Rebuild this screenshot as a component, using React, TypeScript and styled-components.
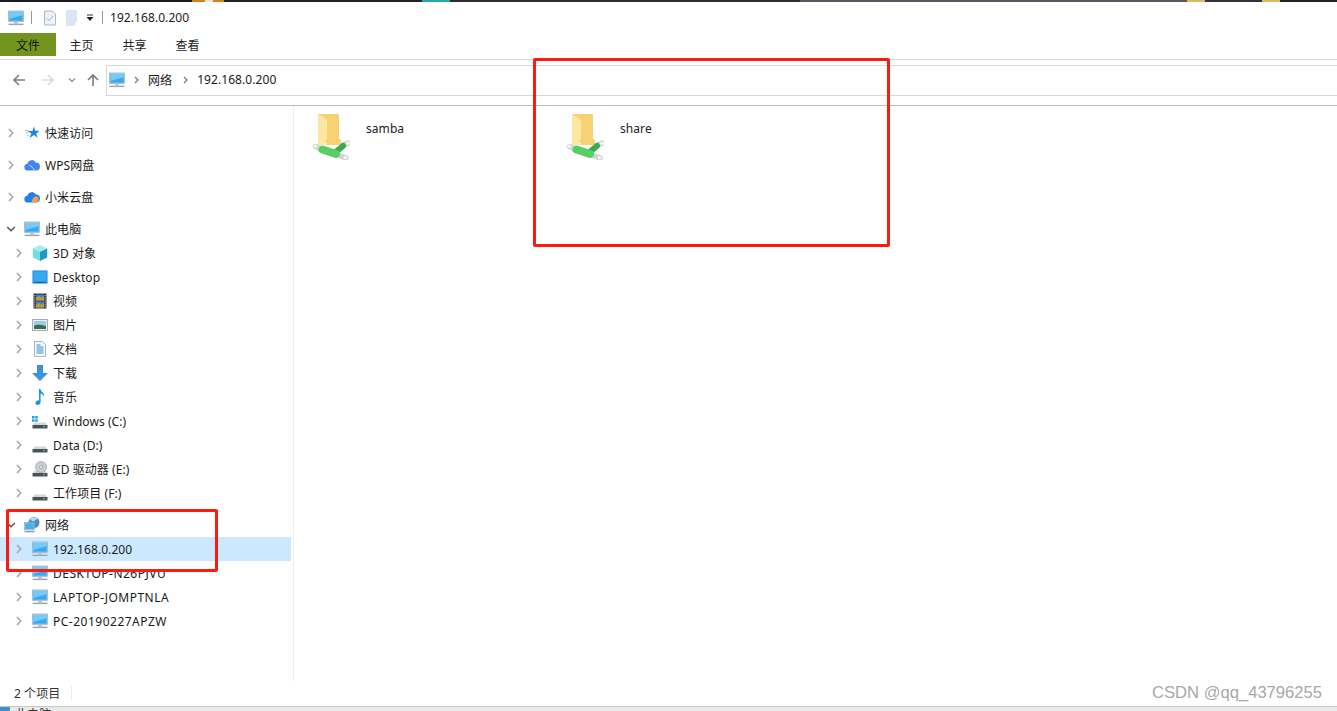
import React from "react";
import styled, { createGlobalStyle } from "styled-components";

const GlobalStyle = createGlobalStyle`
  html, body {
    margin: 0;
    padding: 0;
    background: #fff;
    overflow: hidden;
  }
`;

const Page = styled.div`
  position: relative;
  width: 1337px;
  height: 711px;
  overflow: hidden;
  display: flex;
  flex-direction: column;
  background: #fff;
  color: #1a1a1a;
  font-family: "Noto Sans", "Noto Sans CJK SC", sans-serif;
  font-size: 12px;
  letter-spacing: 0.07px;
`;

const WallpaperStrip = styled.div`
  flex: 0 0 2px;
  background: linear-gradient(
    90deg,
    #1d1b22 0 192px,
    #d9801e 192px 205px,
    #e8e4dc 205px 213px,
    #d9801e 213px 224px,
    #24222a 224px 422px,
    #2ba6ad 422px 450px,
    #2d2b33 450px 800px,
    #5b5664 800px 1187px,
    #dcb964 1187px 1205px,
    #34313a 1205px 1262px,
    #dcb964 1262px 1280px,
    #24222a 1280px
  );
`;

const TitleBar = styled.div`
  flex: 0 0 31px;
  display: flex;
  align-items: center;
  padding-left: 8px;
`;

const TitleSeparator = styled.span<{ $left: number; $right: number }>`
  width: 1px;
  height: 13px;
  background: #9a9a9a;
  margin: 0 ${(p) => p.$right}px 0 ${(p) => p.$left}px;
`;

const QatItem = styled.span<{ $right: number }>`
  display: flex;
  margin-right: ${(p) => p.$right}px;
`;

const TabBar = styled.div`
  flex: 0 0 27px;
  box-sizing: border-box;
  display: flex;
  align-items: flex-start;
  border-bottom: 1px solid #d9d9d9;
`;

const FileTab = styled.div`
  width: 56px;
  height: 23px;
  margin-right: -1px;
  display: flex;
  align-items: center;
  justify-content: center;
  background: #72951f;
  color: #10140a;
`;

const Tab = styled.div`
  width: 53px;
  height: 23px;
  display: flex;
  align-items: center;
  justify-content: center;
  color: #222;
`;

const NavBar = styled.div`
  flex: 0 0 46px;
  display: flex;
  align-items: flex-start;
  padding-top: 5px;
  box-sizing: border-box;
  border-bottom: 1px solid #bdbdbd;
`;

const NavButtons = styled.div`
  width: 106px;
  height: 30px;
  display: flex;
  align-items: center;
  flex: none;
  padding-left: 12px;
  box-sizing: border-box;
`;

const NavButton = styled.span<{ $right: number }>`
  display: flex;
  margin-right: ${(p) => p.$right}px;
`;

const AddressBox = styled.div`
  flex: 1;
  height: 31px;
  box-sizing: border-box;
  border: 1px solid #d9d9d9;
  border-right: none;
  display: flex;
  align-items: center;
  padding: 0 0 2px 2px;
`;

const Crumb = styled.span`
  display: flex;
  margin: 0 8px 0 9px;
`;

const CrumbLabel = styled.span`
  margin-right: 2px;
`;

const Main = styled.div`
  flex: 1;
  display: flex;
  min-height: 0;
`;

const Sidebar = styled.nav`
  width: 294px;
  flex: none;
  box-sizing: border-box;
  border-right: 1px solid #f0f0f0;
  padding: 15px 2px 0 0;
  display: flex;
  flex-direction: column;
  gap: 8px;
`;

const TreeGroup = styled.div`
  display: flex;
  flex-direction: column;
`;

const TreeRow = styled.div<{ $depth: number; $selected?: boolean }>`
  height: 24px;
  display: flex;
  align-items: center;
  box-sizing: border-box;
  padding-left: ${(p) => (p.$depth === 0 ? 6 : 14)}px;
  background: ${(p) => (p.$selected ? "#cce8ff" : "transparent")};
`;

const ChevronSlot = styled.span`
  width: 10px;
  height: 10px;
  flex: none;
  margin-right: 8px;
  display: flex;
`;

const RowIcon = styled.span`
  width: 16px;
  height: 16px;
  flex: none;
  margin-right: 5px;
  display: flex;
`;

const RowLabel = styled.span<{ $caps?: boolean }>`
  letter-spacing: ${(p) => (p.$caps ? "0.5px" : "inherit")};
`;

const Files = styled.section`
  flex: 1;
  display: flex;
  align-items: flex-start;
  padding: 8px 0 0 18px;
`;

const FileTile = styled.div`
  width: 254px;
  display: flex;
  align-items: flex-start;
`;

const FileIcon = styled.span`
  width: 38px;
  height: 46px;
  flex: none;
  display: flex;
  margin-right: 16px;
`;

const FileName = styled.span`
  margin-top: 6px;
`;

const StatusBar = styled.div`
  flex: 0 0 25px;
  box-sizing: border-box;
  display: flex;
  align-items: center;
  padding: 0 0 2px 14px;
  color: #333;
`;

const StatusDivider = styled.span`
  width: 1px;
  height: 14px;
  margin-left: 11px;
  background: #ececec;
`;

const Taskbar = styled.div`
  flex: 0 0 5px;
  display: flex;
  overflow: hidden;
  background: #e9e9e9;
  border-top: 1px solid #c8c8c8;
  box-sizing: border-box;
  line-height: 16px;
  padding-left: 15px;
  color: #333;
`;

const TaskbarIcon = styled.span`
  position: absolute;
  left: 0;
  bottom: 0;
  width: 10px;
  height: 4px;
  background: #3f8fd0;
`;

const RedBox = styled.div<{ $x: number; $y: number; $w: number; $h: number }>`
  position: absolute;
  left: ${(p) => p.$x}px;
  top: ${(p) => p.$y}px;
  width: ${(p) => p.$w}px;
  height: ${(p) => p.$h}px;
  box-sizing: border-box;
  border: 3px solid #fb1b10;
  border-radius: 2px;
`;

const Watermark = styled.div`
  position: absolute;
  right: 15px;
  top: 683px;
  color: #a8a8a8;
  font-family: "Liberation Sans", sans-serif;
  font-size: 16.6px;
  letter-spacing: 0;
  line-height: 20px;
`;

const Svg = styled.svg`
  display: block;
  flex: none;
`;

const Chevron = ({ open }: { open?: boolean }) => (
  <Svg width="10" height="10" viewBox="0 0 10 10" fill="none">
    {open ? (
      <path d="M1.2 3l3.8 3.8L8.8 3" stroke="#555" strokeWidth="1.5" />
    ) : (
      <path d="M3 1l3.8 4L3 9" stroke="#a8a8a8" strokeWidth="1.6" />
    )}
  </Svg>
);

const PcIcon = () => (
  <Svg width="16" height="16" viewBox="0 0 16 16">
    <rect x="0.5" y="1" width="15" height="10.5" fill="#d7e6f2" stroke="#8a98a6" strokeWidth="0.6" />
    <rect x="1.2" y="1.8" width="13.6" height="9" fill="#38a8f2" />
    <path d="M1.2 1.8h13.6v3.5L1.2 9z" fill="#74cbfa" />
    <rect x="6" y="11.5" width="4" height="2" fill="#b9c3cc" />
    <rect x="0.5" y="13.6" width="15" height="1.5" fill="#9aa7b3" />
  </Svg>
);

const StarIcon = () => (
  <Svg width="16" height="16" viewBox="0 0 16 16">
    <path d="M10 1.500l1.300 4.200 4.400.1-3.500 2.600 1.300 4.300-3.500-2.600-4.500 3 1.800-4.700L3.500 6h5z" fill="#1a87dd" />
    <path d="M1 5.500h3.500M2 8h2.500M3 10.500h1.500" stroke="#7cc4f0" strokeWidth="0.900" />
  </Svg>
);

const WpsCloudIcon = () => (
  <Svg width="16" height="16" viewBox="0 0 16 16">
    <path d="M4 13.500a3.400 3.400 0 0 1-.5-6.800A4.400 4.400 0 0 1 11.800 5.600 3.900 3.900 0 0 1 12.200 13.500z" fill="#3f86ee" />
    <path d="M5.500 8.500c2 0 3 2.500 5 4.500" stroke="#cfe2fb" strokeWidth="1" fill="none" />
  </Svg>
);

const MiCloudIcon = () => (
  <Svg width="16" height="16" viewBox="0 0 16 16">
    <path d="M4 13.500a3.400 3.400 0 0 1-.5-6.800A4.400 4.400 0 0 1 11.800 5.600 3.900 3.900 0 0 1 12.200 13.500z" fill="#1f80ec" />
    <path d="M11.600 7.200a3.200 3.200 0 0 1 .6 6.300H7.600c.4-3.400 1.800-5.600 4-6.300z" fill="#f79a55" />
  </Svg>
);

const CubeIcon = () => (
  <Svg width="16" height="16" viewBox="0 0 16 16">
    <path d="M8 0l7.200 3.400-7.200 3.400L.8 3.400z" fill="#a4ecef" />
    <path d="M.8 3.400L8 6.800V16L.8 12.400z" fill="#76dbe2" />
    <path d="M15.200 3.400L8 6.800V16l7.200-3.600z" fill="#1a9bc0" />
  </Svg>
);

const DesktopIcon = () => (
  <Svg width="16" height="16" viewBox="0 0 16 16">
    <rect x="0.500" y="1.500" width="15" height="13" fill="#1580d6" />
    <rect x="1.300" y="2.300" width="13.400" height="10.400" fill="#36a9ee" />
    <rect x="3" y="13" width="10" height="1" fill="#0c5fa6" />
  </Svg>
);

const FilmIcon = () => (
  <Svg width="16" height="16" viewBox="0 0 16 16">
    <rect x="1.500" y="0.500" width="13" height="15" fill="#37393d" />
    <rect x="4" y="1.500" width="8" height="6" fill="#3f7fd0" />
    <rect x="4" y="8.500" width="8" height="6" fill="#3f7fd0" />
    <path d="M4 5l3-2 2 2 3-2v4.500H4zM4 12l3-2 2 2 3-2v4.500H4z" fill="#c79a2d" />
    <path d="M2.800 2v12M13.200 2v12" stroke="#cfd3d6" strokeWidth="1" strokeDasharray="1 1.200" />
  </Svg>
);

const PictureIcon = () => (
  <Svg width="16" height="16" viewBox="0 0 16 16">
    <rect x="0.500" y="2.500" width="15" height="11" fill="#eef1f4" stroke="#8f99a3" strokeWidth="0.800" />
    <rect x="2" y="4" width="12" height="8" fill="#9fcbe4" />
    <path d="M2 9c3-2 6-1 12 0v3H2z" fill="#3b6a57" />
  </Svg>
);

const DocIcon = () => (
  <Svg width="16" height="16" viewBox="0 0 16 16">
    <path d="M2.500.500h8l3 3v12h-11z" fill="#f6f7f8" stroke="#9aa2aa" strokeWidth="0.800" />
    <path d="M4.500 4h4M4.500 6h7M4.500 8h7M4.500 10h7M4.500 12h7" stroke="#2f8fdc" strokeWidth="1" />
  </Svg>
);

const DownloadIcon = () => (
  <Svg width="16" height="16" viewBox="0 0 16 16">
    <path d="M5 0h6v8h5l-8 8-8-8h5z" fill="#3d8fe0" />
  </Svg>
);

const MusicIcon = () => (
  <Svg width="16" height="16" viewBox="0 0 16 16">
    <path d="M7 0h1.400c.4 3 4.600 3.600 3.600 8-.6-2.200-2-3-3.400-3.400V13c0 1.700-1.500 3-3.300 3C4.300 16 3.500 15.200 3.500 14c0-1.600 1.700-3 3.500-2.800z" fill="#1c95e6" />
  </Svg>
);

const DriveBase = () => (
  <>
    <path d="M2.500 9.500h11l2 3h-15z" fill="#d5d8db" />
    <rect x="0.500" y="12" width="15" height="3.500" rx="0.500" fill="#4c5157" />
    <rect x="11" y="13.200" width="2" height="1" fill="#4fd05a" />
  </>
);

const WindowsDriveIcon = () => (
  <Svg width="16" height="16" viewBox="0 0 16 16">
    <DriveBase />
    <path d="M0 3h2.500v2.500H0zM3.200 3h2.500v2.500H3.200zM0 6.200h2.500v2.500H0zM3.200 6.200h2.500v2.500H3.200z" fill="#1aa0e8" />
  </Svg>
);

const DriveIcon = () => (
  <Svg width="16" height="16" viewBox="0 0 16 16">
    <DriveBase />
  </Svg>
);

const CdIcon = () => (
  <Svg width="16" height="16" viewBox="0 0 16 16">
    <DriveBase />
    <circle cx="9" cy="6" r="5.500" fill="#c9ced2" stroke="#8e959b" strokeWidth="0.600" />
    <circle cx="9" cy="6" r="1.500" fill="#f4f5f6" stroke="#858c92" strokeWidth="0.600" />
  </Svg>
);

const NetworkIcon = () => (
  <Svg width="16" height="16" viewBox="0 0 16 16">
    <circle cx="10" cy="5.500" r="5.500" fill="#4b8fc4" />
    <path d="M6 2.500C8 0 12 0 14 2c-2.500 0-3 2-5 2.500z" fill="#b8dff2" />
    <rect x="0.500" y="5.500" width="10" height="7.500" fill="#d7e6f2" stroke="#6f8192" strokeWidth="0.500" />
    <rect x="1.200" y="6.200" width="8.600" height="6" fill="#41aef0" />
    <rect x="0.500" y="14" width="10" height="1.300" fill="#8f9eac" />
  </Svg>
);

const ShareFolderIcon = () => (
  <Svg width="38" height="46" viewBox="0 0 38 46" fill="none">
    <path d="M6 0h21v25l2 1v5H6z" fill="#f6d273" />
    <path d="M6 0l9 5.500V31H6z" fill="#fde7a2" />
    <path d="M15 5.500V25l-1 3h1z" fill="#e5b94f" />
    <path d="M3.500 32.500l7 3M31 31l5.500-2M26 41l8 3" stroke="#cfd3d2" strokeWidth="5.500" strokeLinecap="round" />
    <path d="M3 32l1 .5M36.500 29l-1 .4M34 44l-1-.4" stroke="#f2f3f3" strokeWidth="3" strokeLinecap="round" />
    <path d="M23 38.500l8-6.500" stroke="#36ad4a" strokeWidth="6" strokeLinecap="round" />
    <path d="M10.500 35.500l13.500 4.500" stroke="#58cf63" strokeWidth="8" strokeLinecap="round" />
  </Svg>
);

const BackArrow = () => (
  <Svg width="14" height="14" viewBox="0 0 14 14" fill="none">
    <path d="M13 7H2M7 2L2 7l5 5" stroke="#7d7d7d" strokeWidth="1.600" />
  </Svg>
);

const ForwardArrow = () => (
  <Svg width="14" height="14" viewBox="0 0 14 14" fill="none">
    <path d="M1 7h11M7 2l5 5-5 5" stroke="#d9d9d9" strokeWidth="1.600" />
  </Svg>
);

const SmallDown = () => (
  <Svg width="8" height="8" viewBox="0 0 8 8" fill="none">
    <path d="M1 2.500l3 3 3-3" stroke="#9a9a9a" strokeWidth="1.400" />
  </Svg>
);

const UpArrow = () => (
  <Svg width="14" height="14" viewBox="0 0 14 14" fill="none">
    <path d="M7 13V2M2 7l5-5 5 5" stroke="#7d7d7d" strokeWidth="1.600" />
  </Svg>
);

const CrumbChevron = () => (
  <Svg width="6" height="8" viewBox="0 0 6 8" fill="none">
    <path d="M1 1l3 3-3 3" stroke="#808080" strokeWidth="1.400" />
  </Svg>
);

const QatCheckDoc = () => (
  <Svg width="14" height="16" viewBox="0 0 14 16" fill="none">
    <path d="M1.500 1h8l3 3v11h-11z" fill="#edf2f9" stroke="#a9b9cf" />
    <path d="M4 8.500l2 2 4-4.500" stroke="#9fb0c5" strokeWidth="1" />
  </Svg>
);

const QatBlankDoc = () => (
  <Svg width="14" height="16" viewBox="0 0 14 16">
    <path d="M1 0h11v16H1z" fill="#dce5f3" />
    <path d="M10 12h2v4h-2z" fill="#f6f8fb" />
  </Svg>
);

const QatDropdown = () => (
  <Svg width="8" height="8" viewBox="0 0 8 8">
    <rect x="1" y="0.500" width="6" height="1" fill="#333" />
    <path d="M0.500 3h7L4 7z" fill="#222" />
  </Svg>
);

type Node = { label: string; icon: React.ReactNode; selected?: boolean; caps?: boolean };

const pinned: Node[] = [
  { label: "快速访问", icon: <StarIcon /> },
  { label: "WPS网盘", icon: <WpsCloudIcon /> },
  { label: "小米云盘", icon: <MiCloudIcon /> },
];

const thisPc: Node[] = [
  { label: "3D 对象", icon: <CubeIcon /> },
  { label: "Desktop", icon: <DesktopIcon /> },
  { label: "视频", icon: <FilmIcon /> },
  { label: "图片", icon: <PictureIcon /> },
  { label: "文档", icon: <DocIcon /> },
  { label: "下载", icon: <DownloadIcon /> },
  { label: "音乐", icon: <MusicIcon /> },
  { label: "Windows (C:)", icon: <WindowsDriveIcon /> },
  { label: "Data (D:)", icon: <DriveIcon /> },
  { label: "CD 驱动器 (E:)", icon: <CdIcon /> },
  { label: "工作项目 (F:)", icon: <DriveIcon /> },
];

const network: Node[] = [
  { label: "192.168.0.200", icon: <PcIcon />, selected: true },
  { label: "DESKTOP-N26PJVU", icon: <PcIcon />, caps: true },
  { label: "LAPTOP-JOMPTNLA", icon: <PcIcon />, caps: true },
  { label: "PC-20190227APZW", icon: <PcIcon />, caps: true },
];

const Row = ({ node, depth, open }: { node: Node; depth: number; open?: boolean }) => (
  <TreeRow $depth={depth} $selected={node.selected}>
    <ChevronSlot>
      <Chevron open={open} />
    </ChevronSlot>
    <RowIcon>{node.icon}</RowIcon>
    <RowLabel $caps={node.caps}>{node.label}</RowLabel>
  </TreeRow>
);

const App: React.FC = () => {
  return (
    <Page>
      <GlobalStyle />
      <WallpaperStrip />
      <TitleBar>
        <PcIcon />
        <TitleSeparator $left={7} $right={11} />
        <QatItem $right={8}>
          <QatCheckDoc />
        </QatItem>
        <QatItem $right={7}>
          <QatBlankDoc />
        </QatItem>
        <QatDropdown />
        <TitleSeparator $left={8} $right={7} />
        <span>192.168.0.200</span>
      </TitleBar>
      <TabBar>
        <FileTab>文件</FileTab>
        <Tab>主页</Tab>
        <Tab>共享</Tab>
        <Tab>查看</Tab>
      </TabBar>
      <NavBar>
        <NavButtons>
          <NavButton $right={15}>
            <BackArrow />
          </NavButton>
          <NavButton $right={13}>
            <ForwardArrow />
          </NavButton>
          <NavButton $right={10}>
            <SmallDown />
          </NavButton>
          <UpArrow />
        </NavButtons>
        <AddressBox>
          <PcIcon />
          <Crumb>
            <CrumbChevron />
          </Crumb>
          <CrumbLabel>网络</CrumbLabel>
          <Crumb>
            <CrumbChevron />
          </Crumb>
          <span>192.168.0.200</span>
        </AddressBox>
      </NavBar>
      <Main>
        <Sidebar>
          {pinned.map((node) => (
            <TreeGroup key={node.label}>
              <Row node={node} depth={0} />
            </TreeGroup>
          ))}
          <TreeGroup>
            <Row node={{ label: "此电脑", icon: <PcIcon /> }} depth={0} open />
            {thisPc.map((node) => (
              <Row key={node.label} node={node} depth={1} />
            ))}
          </TreeGroup>
          <TreeGroup>
            <Row node={{ label: "网络", icon: <NetworkIcon /> }} depth={0} open />
            {network.map((node) => (
              <Row key={node.label} node={node} depth={1} />
            ))}
          </TreeGroup>
        </Sidebar>
        <Files>
          <FileTile>
            <FileIcon>
              <ShareFolderIcon />
            </FileIcon>
            <FileName>samba</FileName>
          </FileTile>
          <FileTile>
            <FileIcon>
              <ShareFolderIcon />
            </FileIcon>
            <FileName>share</FileName>
          </FileTile>
        </Files>
      </Main>
      <StatusBar>
        2 个项目
        <StatusDivider />
      </StatusBar>
      <Taskbar>
        <TaskbarIcon />
        此电脑
      </Taskbar>
      <RedBox $x={533} $y={58} $w={357} $h={189} />
      <RedBox $x={6} $y={509} $w={212} $h={63} />
      <Watermark>CSDN @qq_43796255</Watermark>
    </Page>
  );
};

export default App;
